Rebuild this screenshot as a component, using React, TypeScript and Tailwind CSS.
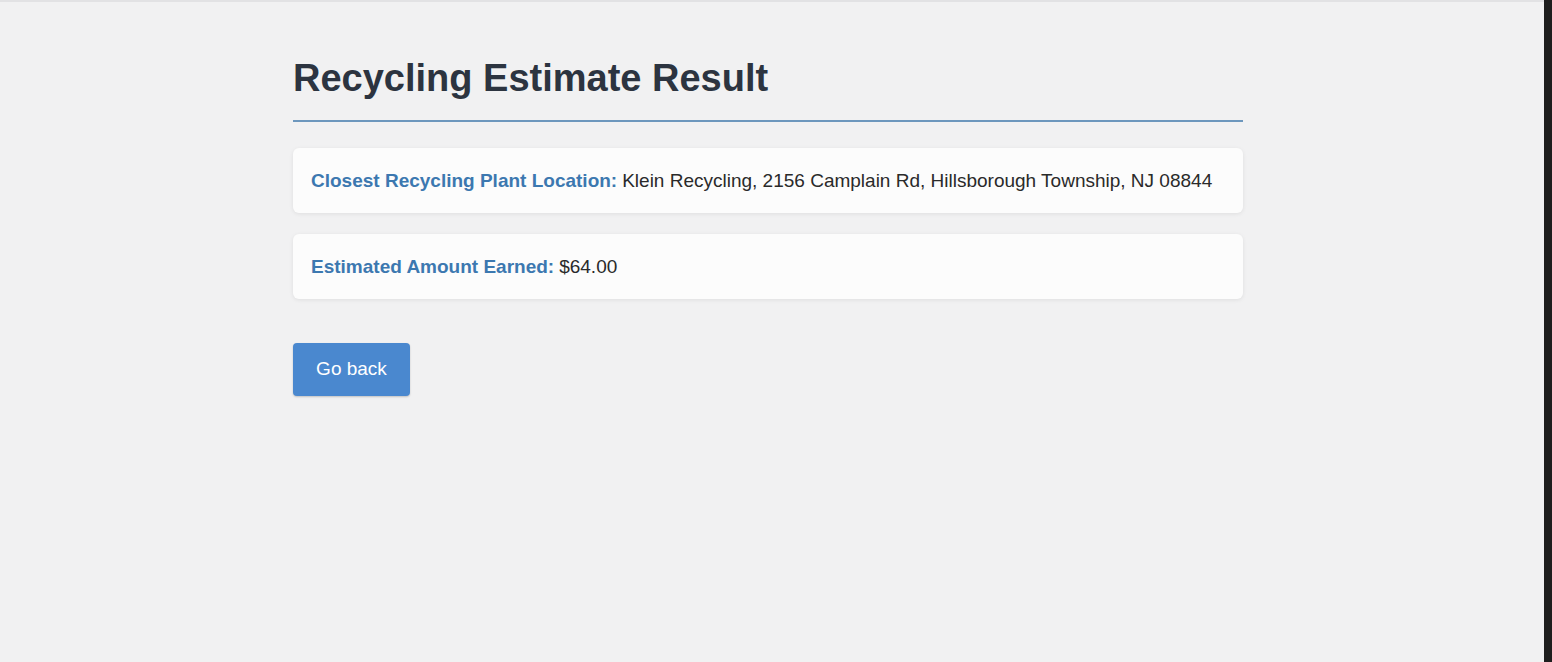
const rows = [
  {
    label: "Closest Recycling Plant Location:",
    value: "Klein Recycling, 2156 Camplain Rd, Hillsborough Township, NJ 08844",
  },
  { label: "Estimated Amount Earned:", value: "$64.00" },
];

export default function App() {
  return (
    <div className="flex min-h-[662px] bg-[#f1f1f2] font-['Liberation_Sans',Arial,sans-serif]">
      <main className="w-[1544px] border-t-2 border-[#e2e2e4]">
        <div className="w-[950px] ml-[293px] pt-[52px]">
          <h1 className="text-[38px] font-bold text-[#2c3440] pb-[18px] border-b-2 border-[#6d97bd] leading-[48px]">
            Recycling Estimate Result
          </h1>

          <div className="mt-[26px] space-y-[21px]">
            {rows.map((row) => (
              <div
                key={row.label}
                className="bg-[#fcfcfc] rounded-md shadow-[0_1px_4px_rgba(0,0,0,0.08)] h-[65px] px-[18px] pt-[1px] flex items-center text-[19px] text-[#2a2a2a]"
              >
                <span className="font-bold text-[#3c78b0] mr-[5px]">{row.label}</span>
                {row.value}
              </div>
            ))}
          </div>

          <button className="mt-[44px] w-[117px] h-[53px] rounded bg-[#4a88cf] text-white text-[19px] shadow-[0_1px_2px_rgba(0,0,0,0.2)]">
            Go back
          </button>
        </div>
      </main>
      <div className="w-[8px] bg-[#1e1e1e]" />
    </div>
  );
}
